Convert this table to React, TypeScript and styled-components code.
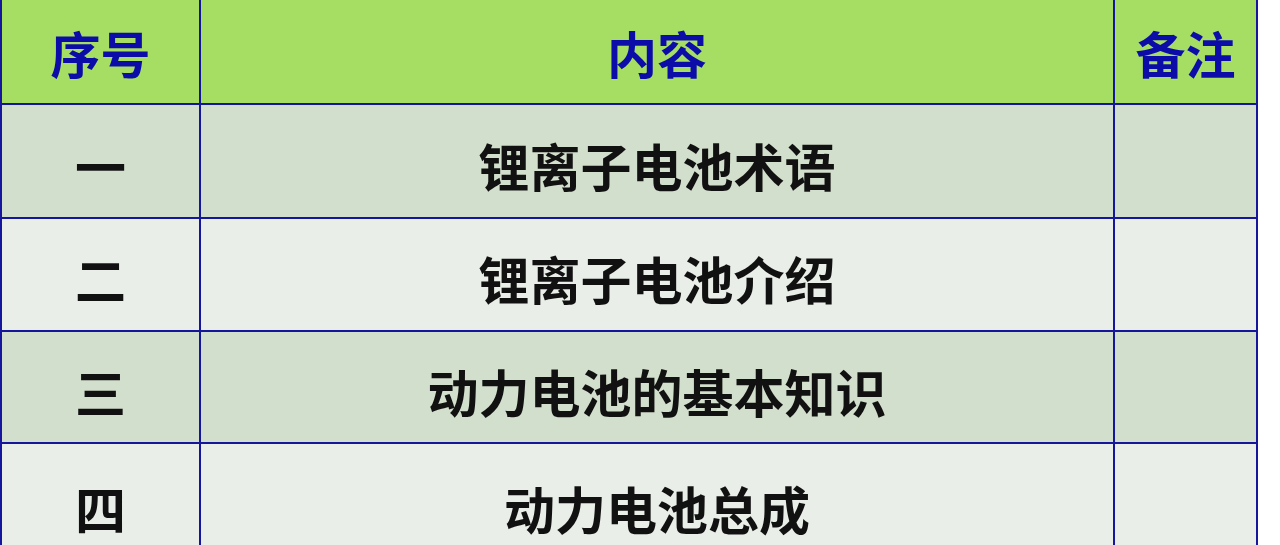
import * as React from 'react'
import styled, { createGlobalStyle } from 'styled-components'

const GlobalStyle = createGlobalStyle`
  html, body {
    margin: 0;
    padding: 0;
    background: #ffffff;
    overflow: hidden;
  }
`

const Grid = styled.div`
  display: grid;
  grid-template-columns: 197px 912px 141px;
  grid-template-rows: 103px 112px 111px 110px 120px;
  gap: 2px;
  width: 1258px;
  padding: 0 2px;
  box-sizing: border-box;
  background: #16169c;
  font-family: 'Noto Sans CJK SC', 'Noto Sans', sans-serif;
  font-weight: 700;
`

const Cell = styled.div<{ $tone: 'head' | 'dark' | 'light' }>`
  display: flex;
  align-items: center;
  justify-content: center;
  box-sizing: border-box;
  font-size: ${({ $tone }) => ($tone === 'head' ? '50px' : '51px')};
  padding-top: ${({ $tone }) => ($tone === 'head' ? '0' : '8px')};
  line-height: 1;
  background: ${({ $tone }) =>
    $tone === 'head' ? '#a5de62' : $tone === 'dark' ? '#d3dfcd' : '#e9eee8'};
  color: ${({ $tone }) => ($tone === 'head' ? '#0c0ca8' : '#111111')};
`

const headers = ['序号', '内容', '备注']

const rows = [
  ['一', '锂离子电池术语'],
  ['二', '锂离子电池介绍'],
  ['三', '动力电池的基本知识'],
  ['四', '动力电池总成'],
]

export default function App() {
  return (
    <>
      <GlobalStyle />
      <Grid>
        {headers.map((h) => (
          <Cell key={h} $tone="head">
            {h}
          </Cell>
        ))}
        {rows.map(([no, text], i) => {
          const tone = i % 2 === 0 ? 'dark' : 'light'
          return (
            <React.Fragment key={no}>
              <Cell $tone={tone}>{no}</Cell>
              <Cell $tone={tone}>{text}</Cell>
              <Cell $tone={tone} />
            </React.Fragment>
          )
        })}
      </Grid>
    </>
  )
}
